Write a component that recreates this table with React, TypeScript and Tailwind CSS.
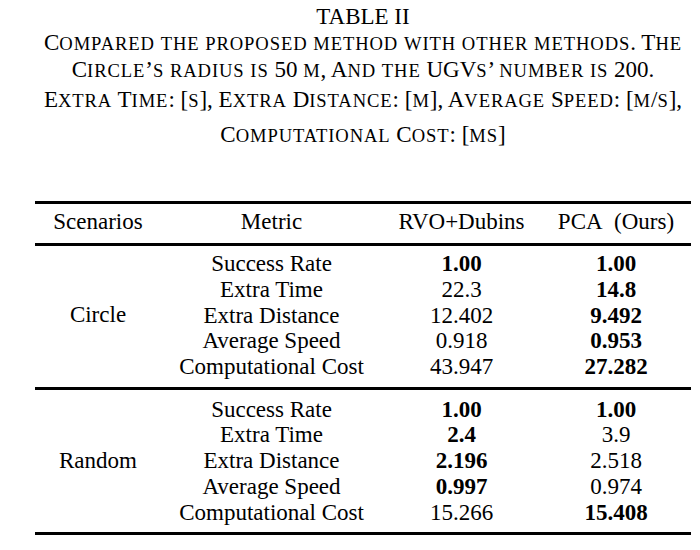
import React from "react";

const serif = { fontFamily: '"Liberation Serif", "Times New Roman", serif' };

function SC({ text }: { text: string }) {
  const runs: { small: boolean; s: string }[] = [];
  for (const ch of text) {
    const small = /[a-z]/.test(ch);
    const last = runs[runs.length - 1];
    if (last && last.small === small) last.s += ch;
    else runs.push({ small, s: ch });
  }
  return (
    <>
      {runs.map((r, i) =>
        r.small ? (
          <span key={i} className="text-[18.6px] tracking-[0.9px]">
            {r.s.toUpperCase()}
          </span>
        ) : (
          <span key={i}>{r.s}</span>
        )
      )}
    </>
  );
}

type Row = { metric: string; a: string; ab: boolean; b: string; bb: boolean };

const circle: Row[] = [
  { metric: "Success Rate", a: "1.00", ab: true, b: "1.00", bb: true },
  { metric: "Extra Time", a: "22.3", ab: false, b: "14.8", bb: true },
  { metric: "Extra Distance", a: "12.402", ab: false, b: "9.492", bb: true },
  { metric: "Average Speed", a: "0.918", ab: false, b: "0.953", bb: true },
  { metric: "Computational Cost", a: "43.947", ab: false, b: "27.282", bb: true },
];

const random: Row[] = [
  { metric: "Success Rate", a: "1.00", ab: true, b: "1.00", bb: true },
  { metric: "Extra Time", a: "2.4", ab: true, b: "3.9", bb: false },
  { metric: "Extra Distance", a: "2.196", ab: true, b: "2.518", bb: false },
  { metric: "Average Speed", a: "0.997", ab: true, b: "0.974", bb: false },
  { metric: "Computational Cost", a: "15.266", ab: false, b: "15.408", bb: true },
];

const cols = "grid grid-cols-[126px_221px_159px_150px]";

function Block({ name, rows, top }: { name: string; rows: Row[]; top: string }) {
  return (
    <div className={`${cols} ${top} pb-[6.7px]`}>
      <div className="flex items-center justify-center">{name}</div>
      <div className="flex flex-col items-center">
        {rows.map((r) => (
          <div key={r.metric} className="h-[25.8px] leading-[25.8px] whitespace-nowrap">
            {r.metric}
          </div>
        ))}
      </div>
      <div className="flex flex-col items-center">
        {rows.map((r) => (
          <div key={r.metric} className={`h-[25.8px] leading-[25.8px] ${r.ab ? "font-bold" : ""}`}>
            {r.a}
          </div>
        ))}
      </div>
      <div className="flex flex-col items-center">
        {rows.map((r) => (
          <div key={r.metric} className={`h-[25.8px] leading-[25.8px] ${r.bb ? "font-bold" : ""}`}>
            {r.b}
          </div>
        ))}
      </div>
    </div>
  );
}

export default function App() {
  return (
    <div className="w-[700px] h-[550px] bg-white text-black overflow-hidden" style={serif}>
      <div className="ml-[35px] w-[656px] text-[23px]">
        <div className="text-center mt-[6px] h-[24px] leading-[22px]">TABLE II</div>
        <div className="text-center h-[27px] leading-[26px] whitespace-nowrap">
          <SC text="Compared the proposed method with other methods. The" />
        </div>
        <div className="text-center h-[30px] leading-[26px] whitespace-nowrap">
          <SC text="Circle’s radius is 50 m, And the UGVs’ number is 200." />
        </div>
        <div className="text-center h-[27px] leading-[26px] whitespace-nowrap">
          <SC text="Extra Time: [s], Extra Distance: [m], Average Speed: [m/s]," />
        </div>
        <div className="text-center mt-[8px] h-[26px] leading-[26px] whitespace-nowrap">
          <SC text="Computational Cost: [ms]" />
        </div>

        <div className="mt-[53px]">
          <div className="h-[3px] bg-black" />
          <div className={`${cols} pt-[5px] pb-[8px] leading-[26px]`}>
            <div className="text-center">Scenarios</div>
            <div className="text-center">Metric</div>
            <div className="text-center">RVO+Dubins</div>
            <div className="text-center whitespace-nowrap">PCA&nbsp;&nbsp;(Ours)</div>
          </div>
          <div className="h-[3px] bg-black" />
          <Block name="Circle" rows={circle} top="pt-[5px]" />
          <div className="h-[3px] bg-black" />
          <Block name="Random" rows={random} top="pt-[7px]" />
          <div className="h-[3px] bg-black" />
        </div>
      </div>
    </div>
  );
}
